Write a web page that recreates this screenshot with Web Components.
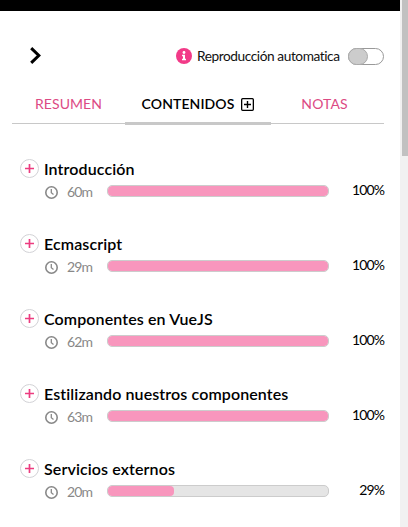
<!DOCTYPE html>
<html lang="es">
<head>
<meta charset="utf-8">
<title>Contenidos</title>
<style>
html,body{margin:0;height:100%;overflow:hidden;background:#fff}
body{font-family:Lato,"Open Sans",sans-serif;color:#000;font-variant-ligatures:none}
</style>
</head>
<body>
<course-panel></course-panel>
<script>
const define = (name, html, setup) => customElements.define(name, class extends HTMLElement {
  constructor() {
    super();
    this.attachShadow({ mode: 'open' });
  }
  connectedCallback() {
    this.shadowRoot.innerHTML = html;
    if (setup) setup(this, this.shadowRoot);
  }
});

define('toggle-switch', `
<style>
:host{display:block;box-sizing:border-box;width:36px;height:17px;border:1px solid #999;border-radius:9px;background:#fff}
i{display:block;box-sizing:border-box;width:20px;height:17px;margin:-1px;border:1px solid #aaa;border-radius:9px;background:#ccc}
</style><i></i>`);

define('panel-header', `
<style>
:host{display:flex;align-items:center;height:24px;padding:0 0 0 17px}
.chev{display:block;width:13px;height:19px;margin-top:-2px}
.info{display:block;width:16px;height:16px;margin-left:auto}
span{font-size:13.7px;line-height:20px;margin:0 8px 0 5px;width:143px;white-space:nowrap;color:#111;letter-spacing:-.43px}
</style>
<svg class="chev" viewBox="0 0 13 19"><path d="M2.2 2.2 9.8 9.5 2.2 16.8" fill="none" stroke="#000" stroke-width="3"/></svg>
<svg class="info" viewBox="0 0 16 16"><circle cx="8" cy="8" r="8" fill="#f23a88"/><circle cx="8" cy="4.5" r="1.4" fill="#fff"/><path d="M6 6.8h3v4h1v1.5H6v-1.500h1V8.300H6z" fill="#fff"/></svg>
<span><slot></slot></span><toggle-switch></toggle-switch>`);

define('tab-item', `
<style>
:host{display:flex;align-items:center;justify-content:center;box-sizing:border-box;height:36px;padding-bottom:4px;font-size:14px;letter-spacing:.1px;line-height:20px;color:#dc4a84;white-space:nowrap}
:host([active]){color:#000;font-weight:600;letter-spacing:.1px;border-bottom:3px solid #c8c8c8;height:37px;padding-bottom:2px}
svg{display:none;width:13px;height:13px;margin-left:7px}
:host([active]) svg{display:block}
</style>
<slot></slot><svg viewBox="0 0 13 13" fill="none" stroke="#000"><rect x=".65" y=".65" width="11.700" height="11.700" rx="1" stroke-width="1.300"/><path d="M6.500 3v7M3 6.500h7" stroke-width="1.400"/></svg>`);

define('tab-bar', `
<style>
:host{display:grid;grid-template-columns:113px 146px 113px;box-sizing:border-box;height:37px;margin-top:20px;background:linear-gradient(#c8c8c8,#c8c8c8) 0 35px/100% 1px no-repeat}
tab-item:last-child{padding-right:6px}
</style>
<tab-item>RESUMEN</tab-item><tab-item active>CONTENIDOS</tab-item><tab-item>NOTAS</tab-item>`);

define('progress-bar', `
<style>
:host{display:block;box-sizing:border-box;width:222px;height:12px;border:1px solid #ccc;border-radius:5px;background:#e5e5e5;overflow:hidden}
i{display:block;height:10px;border-radius:4px;background:#f896bd}
</style><i></i>`, (el, root) => { root.querySelector('i').style.width = el.getAttribute('value') + '%'; });

define('course-section', `
<style>
:host{display:grid;grid-template-columns:24px 1fr;grid-template-rows:24px 20px;height:75px;padding-left:8px;box-sizing:border-box}
.plus{display:block;width:19px;height:19px;margin-top:2px}
h2{margin:0;font-size:16px;line-height:24px;font-weight:600;white-space:nowrap;letter-spacing:.11px}
.meta{grid-column:2;display:flex;align-items:center;height:20px;font-size:14px;line-height:20px}
.clock{display:block;width:13px;height:13px;margin:2px 9px 0 1px}
.time{width:40px;color:#888;margin-top:1px;letter-spacing:-.9px}
.pct{margin-left:auto;margin-top:-3px;letter-spacing:-.9px;margin-right:0}
progress-bar{margin-top:0}
</style>
<svg class="plus" viewBox="0 0 19 19"><circle cx="9.500" cy="9.500" r="9" fill="#fff" stroke="#d2d2d6"/><path d="M9.500 5v9M5 9.500h9" stroke="#ec3c80" stroke-width="1.700"/></svg>
<h2></h2>
<div class="meta"><svg class="clock" viewBox="0 0 13 13" fill="none" stroke="#888"><circle cx="6.500" cy="6.500" r="5.700" stroke-width="1.600"/><path d="M6.300 3v3.700l2.200 1.700" stroke-width="1.300"/></svg>
<span class="time"></span><progress-bar></progress-bar><span class="pct"></span></div>`, (el, root) => {
  const v = el.getAttribute('progress');
  root.querySelector('h2').textContent = el.getAttribute('heading');
  root.querySelector('.time').textContent = el.getAttribute('time');
  root.querySelector('.pct').textContent = v + '%';
  const bar = root.querySelector('progress-bar');
  bar.setAttribute('value', v === '29' ? 30 : v);
  bar.connectedCallback();
});

define('scroll-rail', `
<style>
:host{display:block;width:8px;height:527px;background:#f1f1f1}
i{display:block;margin-left:2px;height:156px;background:#c1c1c1}
</style><i></i>`);

define('course-panel', `
<style>
:host{display:grid;grid-template-columns:400px 8px;width:408px;height:527px;overflow:hidden}
.top{height:11px;background:#000}
main{padding:33px 16px 0 12px}
.list{padding-top:32px}
</style>
<div><div class="top"></div><main>
<panel-header>Reproducción automatica</panel-header>
<tab-bar></tab-bar>
<div class="list">
<course-section heading="Introducción" time="60m" progress="100"></course-section>
<course-section heading="Ecmascript" time="29m" progress="100"></course-section>
<course-section heading="Componentes en VueJS" time="62m" progress="100"></course-section>
<course-section heading="Estilizando nuestros componentes" time="63m" progress="100"></course-section>
<course-section heading="Servicios externos" time="20m" progress="29"></course-section>
</div></main></div>
<scroll-rail></scroll-rail>`);
</script>
</body>
</html>
